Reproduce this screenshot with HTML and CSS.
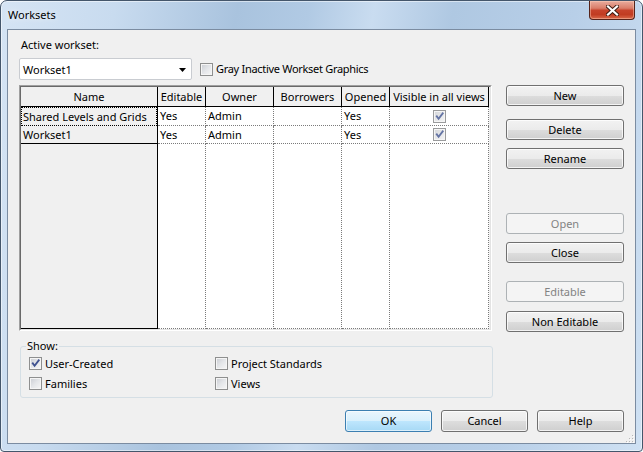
FILE: index.html
```html
<!DOCTYPE html>
<html lang="en">
<head>
<meta charset="utf-8">
<title>Worksets</title>
<link rel="stylesheet" href="styles.css">
</head>
<body>
<div class="window">
  <div class="titlebar">
    <span class="title">Worksets</span>
    <div class="close-btn">
      <svg width="13" height="11" viewBox="0 0 13 11"><path d="M2 1.5 L11 9.5 M11 1.5 L2 9.5" stroke="#3b1b12" stroke-width="4" stroke-linecap="square"/><path d="M2 1.5 L11 9.5 M11 1.5 L2 9.5" stroke="#fff" stroke-width="2.2" stroke-linecap="square"/></svg>
    </div>
  </div>
  <div class="client">
    <div class="label">Active workset:</div>
    <div class="toprow">
      <div class="select"><span>Workset1</span><svg width="7" height="4" viewBox="0 0 7 4"><polygon points="0,0 7,0 3.5,4" fill="#000"/></svg></div>
      <label class="check"><span class="cb"></span><span class="tight">Gray Inactive Workset Graphics</span></label>
    </div>
    <div class="main">
      <div class="leftcol">
        <div class="grid-outer">
          <div class="grid-inner">
            <div class="row head">
              <div class="h">Name</div>
              <div class="h">Editable</div>
              <div class="h">Owner</div>
              <div class="h">Borrowers</div>
              <div class="h">Opened</div>
              <div class="h">Visible in all views</div>
            </div>
            <div class="row r1">
              <div class="c name focus"><div class="focus-rect">Shared Levels and Grids</div></div>
              <div class="c">Yes</div>
              <div class="c">Admin</div>
              <div class="c"></div>
              <div class="c">Yes</div>
              <div class="c center"><span class="cb dim"><svg width="13" height="13" viewBox="0 0 13 13"><polygon points="2.5,6.3 4,5 5.6,7.2 9.6,2 11,3.2 5.6,10.3" fill="#6474a4"/></svg></span></div>
            </div>
            <div class="row r2">
              <div class="c name">Workset1</div>
              <div class="c">Yes</div>
              <div class="c">Admin</div>
              <div class="c"></div>
              <div class="c">Yes</div>
              <div class="c center"><span class="cb dim"><svg width="13" height="13" viewBox="0 0 13 13"><polygon points="2.5,6.3 4,5 5.6,7.2 9.6,2 11,3.2 5.6,10.3" fill="#6474a4"/></svg></span></div>
            </div>
            <div class="row fill">
              <div class="c name"></div>
              <div class="c"></div>
              <div class="c"></div>
              <div class="c"></div>
              <div class="c"></div>
              <div class="c"></div>
            </div>
          </div>
        </div>
        <div class="group">
          <span class="legend">Show:</span>
          <label class="check"><span class="cb"><svg width="13" height="13" viewBox="0 0 13 13"><polygon points="2.5,6.3 4,5 5.6,7.2 9.6,2 11,3.2 5.6,10.3" fill="#3f5290"/></svg></span><span>User-Created</span></label>
          <label class="check"><span class="cb"></span><span>Project Standards</span></label>
          <label class="check"><span class="cb"></span><span>Families</span></label>
          <label class="check"><span class="cb"></span><span>Views</span></label>
        </div>
      </div>
      <div class="side">
        <div class="btn b-new">New</div>
        <div class="btn b-delete">Delete</div>
        <div class="btn b-rename">Rename</div>
        <div class="btn disabled b-open">Open</div>
        <div class="btn b-close">Close</div>
        <div class="btn disabled b-editable">Editable</div>
        <div class="btn b-noned">Non Editable</div>
      </div>
    </div>
    <div class="footer">
      <div class="btn default fbtn">OK</div>
      <div class="btn fbtn">Cancel</div>
      <div class="btn fbtn">Help</div>
    </div>
    <svg class="grip" width="10" height="10" viewBox="0 0 10 10">
      <g fill="#fff"><rect x="9" y="3" width="1" height="1"/><rect x="9" y="6" width="1" height="1"/><rect x="6" y="6" width="1" height="1"/><rect x="9" y="9" width="1" height="1"/><rect x="6" y="9" width="1" height="1"/><rect x="3" y="9" width="1" height="1"/></g>
      <g fill="#b8b8b8"><rect x="8" y="2" width="1" height="1"/><rect x="8" y="5" width="1" height="1"/><rect x="5" y="5" width="1" height="1"/><rect x="8" y="8" width="1" height="1"/><rect x="5" y="8" width="1" height="1"/><rect x="2" y="8" width="1" height="1"/></g>
    </svg>
  </div>
</div>
</body>
</html>
```
FILE: styles.css
```css
* { box-sizing: border-box; }
html, body { margin: 0; padding: 0; }
body {
  width: 643px;
  height: 452px;
  overflow: hidden;
  background: #ffffff;
  font-family: "Noto Sans", "Segoe UI", sans-serif;
  font-size: 11px;
  color: #000;
}
.window {
  width: 643px;
  height: 452px;
  border: 1px solid #44566b;
  border-radius: 7px 7px 4px 4px;
  padding: 0 6px 7px 6px;
  display: flex;
  flex-direction: column;
  background: linear-gradient(100deg, #d5e4f4 0%, #c8dbef 16%, #a9c3de 33%, #b1cae4 43%, #c9dcf0 52%, #afc8e2 63%, #b8cfe8 80%, #cfe1f3 100%);
  box-shadow: inset 0 0 0 1px rgba(255,255,255,.5);
}
.titlebar {
  height: 28px;
  flex: none;
  display: flex;
  justify-content: space-between;
  align-items: flex-start;
}
.title {
  padding: 7px 0 0 1px;
  line-height: 14px;
  text-shadow: 0 0 6px rgba(255,255,255,.9);
}
.close-btn {
  width: 46px;
  height: 19px;
  margin-right: 1px;
  border: 1px solid #55231a;
  border-top: none;
  border-radius: 0 0 4px 4px;
  background: linear-gradient(#e9ad9e 0%, #d97d69 40%, #c6432b 52%, #c13c22 75%, #d9694a 100%);
  box-shadow: inset 0 0 0 1px rgba(255,210,190,.45);
  display: flex;
  align-items: center;
  justify-content: center;
}
.client {
  flex: 1;
  border: 1px solid #7b8ca1;
  background: #f0f0f0;
  padding: 7px 11px 11px 11px;
  position: relative;
  display: flex;
  flex-direction: column;
}
.label {
  height: 16px;
  line-height: 16px;
  margin-bottom: 5px;
  padding-left: 2px;
}
.toprow {
  height: 22px;
  margin-bottom: 5px;
  display: flex;
  align-items: center;
}
.select {
  width: 173px;
  height: 22px;
  border: 1px solid #c9ccd1;
  border-radius: 2px;
  background: #fff;
  display: flex;
  align-items: center;
  justify-content: space-between;
  padding: 0 5px 0 3px;
}
.select svg { margin-top: 1px; }
.check {
  display: flex;
  align-items: center;
  gap: 3px;
  height: 13px;
  line-height: 14px;
  white-space: nowrap;
}
.toprow .check { margin-left: 8px; }
.tight { letter-spacing: -0.3px; }
.cb {
  width: 13px;
  height: 13px;
  flex: none;
  position: relative;
  border: 1px solid #8e8f8f;
  background: linear-gradient(135deg, #c9ccd2 0%, #e4e6e9 50%, #f7f7f7 100%);
  box-shadow: inset 0 0 0 1px #f5f5f5;
}
.cb.dim {
  border-color: #9a9b9c;
  background: linear-gradient(135deg, #d3d5d8 0%, #e6e7e9 50%, #f4f4f4 100%);
}
.cb svg {
  position: absolute;
  left: -1px;
  top: -1px;
}
.main {
  height: 313px;
  display: flex;
}
.leftcol {
  width: 474px;
  display: flex;
  flex-direction: column;
}
.grid-outer {
  width: 473px;
  height: 246px;
  border: 1px solid;
  border-color: #a0a0a0 #ffffff #ffffff #a0a0a0;
}
.grid-inner {
  height: 100%;
  border: 1px solid;
  border-color: #696969 #e3e3e3 #e3e3e3 #696969;
  background: #f0f0f0;
  display: flex;
  flex-direction: column;
}
.row {
  display: grid;
  grid-template-columns: 137px 48px 68px 68px 48px 99px;
}
.row.head { height: 20px; }
.row.r1 { height: 19px; }
.row.r2 { height: 18px; }
.row.fill { flex: 1; }
.h {
  background: #f0f0f0;
  border-right: 1px solid #000;
  border-bottom: 1px solid #000;
  text-align: center;
  line-height: 19px;
  white-space: nowrap;
  overflow: hidden;
}
.c {
  background: #fff;
  border-right: 1px dotted #7a7a7a;
  border-bottom: 1px dotted #7a7a7a;
  padding-left: 2px;
  line-height: 17px;
  white-space: nowrap;
  overflow: hidden;
}
.c.name {
  background: #f0f0f0;
  border-right: 1px solid #000;
  border-bottom: 1px solid #000;
}
.c.name.focus {
  border-bottom: none;
  padding: 0;
}
.focus-rect {
  height: 100%;
  border: 1px dotted #000;
  padding-left: 1px;
  line-height: 17px;
}
.c.center {
  display: flex;
  align-items: center;
  justify-content: center;
  padding-left: 0;
}
.group {
  margin-top: 15px;
  margin-left: 1px;
  width: 473px;
  height: 52px;
  border: 1px solid #d5dfe5;
  border-radius: 3px;
  position: relative;
  padding: 10px 8px 7px 8px;
  display: grid;
  grid-template-columns: 186px 1fr;
  row-gap: 7px;
}
.legend {
  position: absolute;
  left: 5px;
  top: -8px;
  padding: 0 1px;
  line-height: 14px;
  background: #f0f0f0;
}
.side {
  width: 118px;
  margin-left: 13px;
  display: flex;
  flex-direction: column;
}
.btn {
  height: 21px;
  border: 1px solid #707070;
  border-radius: 3px;
  background: linear-gradient(#f2f2f2 0%, #ebebeb 50%, #dddddd 51%, #cfcfcf 100%);
  box-shadow: inset 0 0 0 1px rgba(255,255,255,.75);
  display: flex;
  align-items: center;
  justify-content: center;
  line-height: 14px;
  flex: none;
}
.btn.disabled {
  border-color: #adb2b5;
  background: #f4f4f4;
  box-shadow: none;
  color: #838383;
}
.btn.default {
  border-color: #3c7fb1;
  background: linear-gradient(#eaf6fd 0%, #d9f0fc 50%, #bee6fd 51%, #a7d9f5 100%);
  box-shadow: inset 0 0 0 1px rgba(255,255,255,.6);
}
.b-delete { margin-top: 13px; }
.b-rename { margin-top: 8px; }
.b-open { margin-top: 44px; }
.b-close { margin-top: 8px; }
.b-editable { margin-top: 18px; }
.b-noned { margin-top: 9px; }
.footer {
  margin-top: 12px;
  display: flex;
  justify-content: flex-end;
  gap: 9px;
}
.fbtn {
  width: 87px;
  height: 22px;
}
.grip {
  position: absolute;
  right: 1px;
  bottom: 0;
}
```
